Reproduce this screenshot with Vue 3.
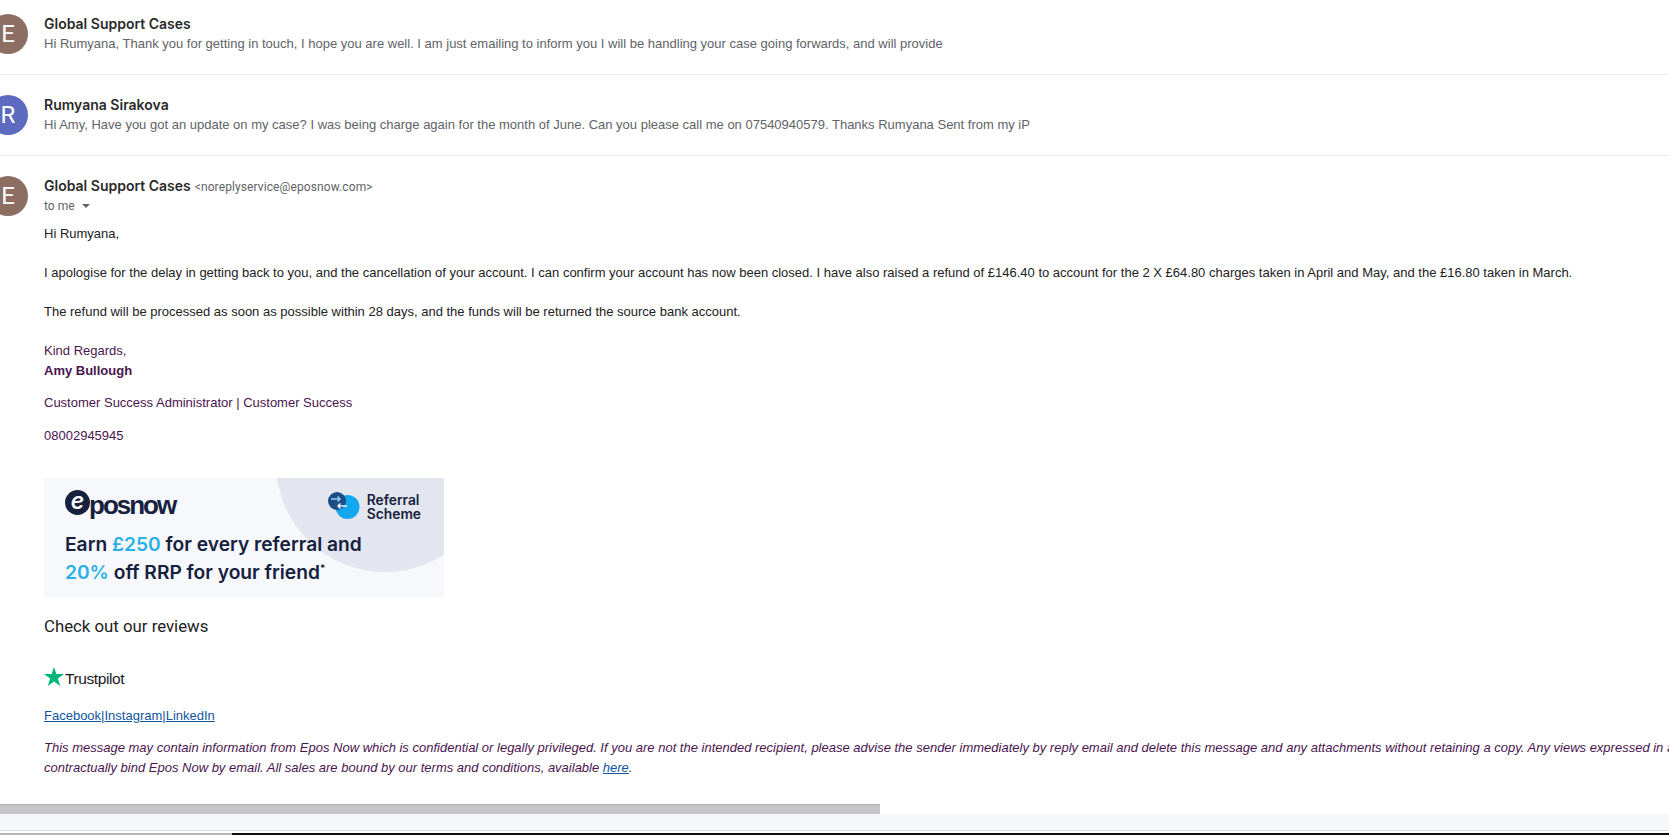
<script setup>
const threads = [
  {
    initial: 'E',
    color: '#8d6e63',
    name: 'Global Support Cases',
    snippet: 'Hi Rumyana, Thank you for getting in touch, I hope you are well. I am just emailing to inform you I will be handling your case going forwards, and will provide'
  },
  {
    initial: 'R',
    color: '#5c6bc0',
    name: 'Rumyana Sirakova',
    snippet: 'Hi Amy, Have you got an update on my case? I was being charge again for the month of June. Can you please call me on 07540940579. Thanks Rumyana Sent from my iP'
  }
]
</script>

<template>
  <div class="page">
    <div class="mail">
      <div v-for="t in threads" :key="t.name" class="thread">
        <div class="avatar" :style="{ background: t.color }">{{ t.initial }}</div>
        <div class="thread-text">
          <div class="sender">{{ t.name }}</div>
          <div class="snippet">{{ t.snippet }}</div>
        </div>
      </div>

      <div class="message">
        <div class="avatar open-avatar">E</div>
        <div class="message-main">
          <div class="sender-line">
            <span class="sender">Global Support Cases</span>
            <span class="address">&lt;noreplyservice@eposnow.com&gt;</span>
          </div>
          <div class="to-line">to me <span class="caret"></span></div>

          <div class="body">
            <p class="first">Hi Rumyana,</p>
            <p>I apologise for the delay in getting back to you, and the cancellation of your account. I can confirm your account has now been closed. I have also raised a refund of £146.40 to account for the 2 X £64.80 charges taken in April and May, and the £16.80 taken in March.</p>
            <p>The refund will be processed as soon as possible within 28 days, and the funds will be returned the source bank account.</p>

            <div class="signature">
              <div class="regards">Kind Regards,</div>
              <div class="sig-name">Amy Bullough</div>
              <div class="sig-role">Customer Success Administrator | Customer Success</div>
              <div class="sig-phone">08002945945</div>
            </div>

            <div class="banner">
              <div class="banner-circle"></div>
              <div class="banner-top">
                <div class="epos-logo">
                  <span class="epos-e">e</span><span class="epos-word">posnow</span>
                </div>
                <div class="scheme">
                  <svg width="32" height="27" viewBox="0 0 32 27">
                    <circle cx="19.5" cy="15" r="12" fill="#12a7ee" />
                    <circle cx="9" cy="9" r="9" fill="#1d4f86" />
                    <path d="M3 7h9M9.500 4.500L12 7l-2.500 2.500" stroke="#8fcdf0" stroke-width="1.500" fill="none" />
                    <path d="M19 14h-9M12.500 11.500L10 14l2.500 2.500" stroke="#e3f4fd" stroke-width="1.500" fill="none" />
                  </svg>
                  <div class="scheme-text">Referral<br />Scheme</div>
                </div>
              </div>
              <div class="banner-line">Earn <b>£250</b> for every referral and</div>
              <div class="banner-line"><b>20%</b> off RRP for your friend<sup>*</sup></div>
            </div>

            <div class="reviews">Check out our reviews</div>

            <div class="trustpilot">
              <svg width="20" height="19" viewBox="0 0 20 19">
                <path d="M10 0l2.400 7H20l-6.100 4.500L16.200 19 10 14.400 3.800 19l2.300-7.500L0 7h7.600z" fill="#00b67a" />
              </svg>
              <span>Trustpilot</span>
            </div>

            <div class="links">
              <a href="#">Facebook</a><a href="#">|</a><a href="#">Instagram</a><a href="#">|</a><a href="#">LinkedIn</a>
            </div>

            <div class="legal">
              <div>This message may contain information from Epos Now which is confidential or legally privileged. If you are not the intended recipient, please advise the sender immediately by reply email and delete this message and any attachments without retaining a copy. Any views expressed in a</div>
              <div>contractually bind Epos Now by email. All sales are bound by our terms and conditions, available <a href="#">here</a>.</div>
            </div>
          </div>
        </div>
      </div>
    </div>

    <div class="scrollbar"><div class="thumb"></div></div>
    <div class="footer-band"></div>
    <div class="taskbar"><div class="taskbar-left"></div></div>
  </div>
</template>

<style>
html, body {
  margin: 0;
  overflow: hidden;
  background: #fff;
}
</style>

<style scoped>
.page {
  width: 1669px;
  height: 835px;
  display: flex;
  flex-direction: column;
  overflow: hidden;
  font-family: "Liberation Sans", Arial, sans-serif;
  background: #fff;
}
.mail {
  flex: 1;
  min-height: 0;
  overflow: hidden;
}
.thread {
  display: flex;
  height: 75px;
  box-sizing: border-box;
  padding-top: 14px;
  border-bottom: 1px solid #e8e8e8;
}
.thread + .thread {
  height: 81px;
  padding-top: 20px;
}
.avatar {
  width: 40px;
  height: 40px;
  margin-left: -12px;
  flex-shrink: 0;
  border-radius: 50%;
  color: #fff;
  font-family: Roboto, sans-serif;
  font-size: 24px;
  line-height: 40px;
  text-align: center;
}
.open-avatar {
  background: #8d6e63;
}
.thread-text {
  margin-left: 16px;
  min-width: 0;
}
.sender {
  font-family: Inter, sans-serif;
  font-size: 14px;
  font-weight: 600;
  color: #2a2a2a;
  line-height: 20px;
}
.snippet {
  font-size: 13px;
  color: #5f6368;
  line-height: 18px;
  margin-top: 1px;
  white-space: nowrap;
}
.message {
  display: flex;
  padding-top: 14px;
  margin-top: 6px;
}
.message-main {
  margin-left: 16px;
  min-width: 0;
  white-space: nowrap;
}
.address {
  font-family: Roboto, sans-serif;
  font-size: 12px;
  letter-spacing: 0.1px;
  color: #5f6368;
  margin-left: 4px;
}
.to-line {
  font-family: Roboto, sans-serif;
  font-size: 12px;
  color: #5f6368;
  line-height: 18px;
  margin-top: 1px;
}
.caret {
  display: inline-block;
  width: 0;
  height: 0;
  margin-left: 4px;
  vertical-align: 2px;
  border-left: 4px solid transparent;
  border-right: 4px solid transparent;
  border-top: 4px solid #5f6368;
}
.body {
  font-size: 13px;
  color: #222;
  line-height: 20px;
  margin-top: 9px;
}
.body p {
  margin: 19px 0 0;
}
.body p.first {
  margin-top: 0;
}
.signature {
  margin-top: 19px;
  color: #4a154f;
}
.sig-name {
  font-weight: 700;
}
.sig-role {
  margin-top: 12px;
}
.sig-phone {
  margin-top: 13px;
}
.banner {
  position: relative;
  width: 400px;
  height: 119px;
  margin-top: 32px;
  background: #f6f8fb;
  overflow: hidden;
  color: #16213e;
  font-family: Inter, sans-serif;
  font-size: 19.200px;
  font-weight: 600;
  line-height: 28px;
}
.banner-circle {
  position: absolute;
  left: 232px;
  top: -124px;
  width: 218px;
  height: 218px;
  border-radius: 50%;
  background: #e3e6ee;
}
.banner-top {
  position: relative;
  display: flex;
  justify-content: space-between;
  padding: 12px 23px 0 21px;
  height: 52px;
  box-sizing: border-box;
}
.epos-logo {
  display: flex;
  align-items: flex-start;
}
.epos-e {
  width: 25px;
  height: 25px;
  border-radius: 50%;
  background: #16213e;
  color: #fff;
  font-size: 23px;
  font-style: italic;
  line-height: 22px;
  text-align: center;
}
.epos-word {
  margin-left: -1px;
  font-family: "Liberation Sans", sans-serif;
  font-size: 26px;
  font-weight: 700;
  line-height: 30px;
  letter-spacing: -2px;
}
.scheme {
  display: flex;
  gap: 7px;
  margin-top: 2px;
}
.scheme-text {
  font-size: 13.800px;
  font-weight: 600;
  line-height: 14px;
  margin-top: 1px;
}
.banner-line {
  position: relative;
  padding-left: 21px;
  white-space: nowrap;
}
.banner-line b {
  color: #29b0e6;
  font-weight: 600;
}
.banner-line sup {
  font-size: 10px;
  line-height: 0;
}
.reviews {
  margin-top: 17px;
  font-family: Roboto, sans-serif;
  font-size: 16.800px;
  color: #222;
  line-height: 24px;
}
.trustpilot {
  display: flex;
  align-items: center;
  gap: 1px;
  margin-top: 31px;
  font-size: 15.500px;
  color: #191919;
  letter-spacing: -0.4px;
}
.trustpilot svg {
  margin-top: -6px;
}
.links {
  margin-top: 17px;
}
.links a, .legal a {
  color: #1155a0;
  text-decoration: underline;
}
.legal {
  margin-top: 12px;
  color: #4a154f;
  font-style: italic;
}
.scrollbar {
  flex-shrink: 0;
  height: 10px;
  background: #fff;
}
.thumb {
  width: 880px;
  height: 100%;
  box-sizing: border-box;
  background: #c6c6c6;
  border-top: 1px solid #b0b0b0;
}
.footer-band {
  flex-shrink: 0;
  height: 16px;
  background: #f5f7fa;
  border-bottom: 1px solid #dcdee2;
}
.taskbar {
  flex-shrink: 0;
  height: 4px;
  box-sizing: border-box;
  border-top: 2px solid #fff;
  background: #111;
}
.taskbar-left {
  width: 232px;
  height: 100%;
  background: #b5b5b5;
}
</style>
